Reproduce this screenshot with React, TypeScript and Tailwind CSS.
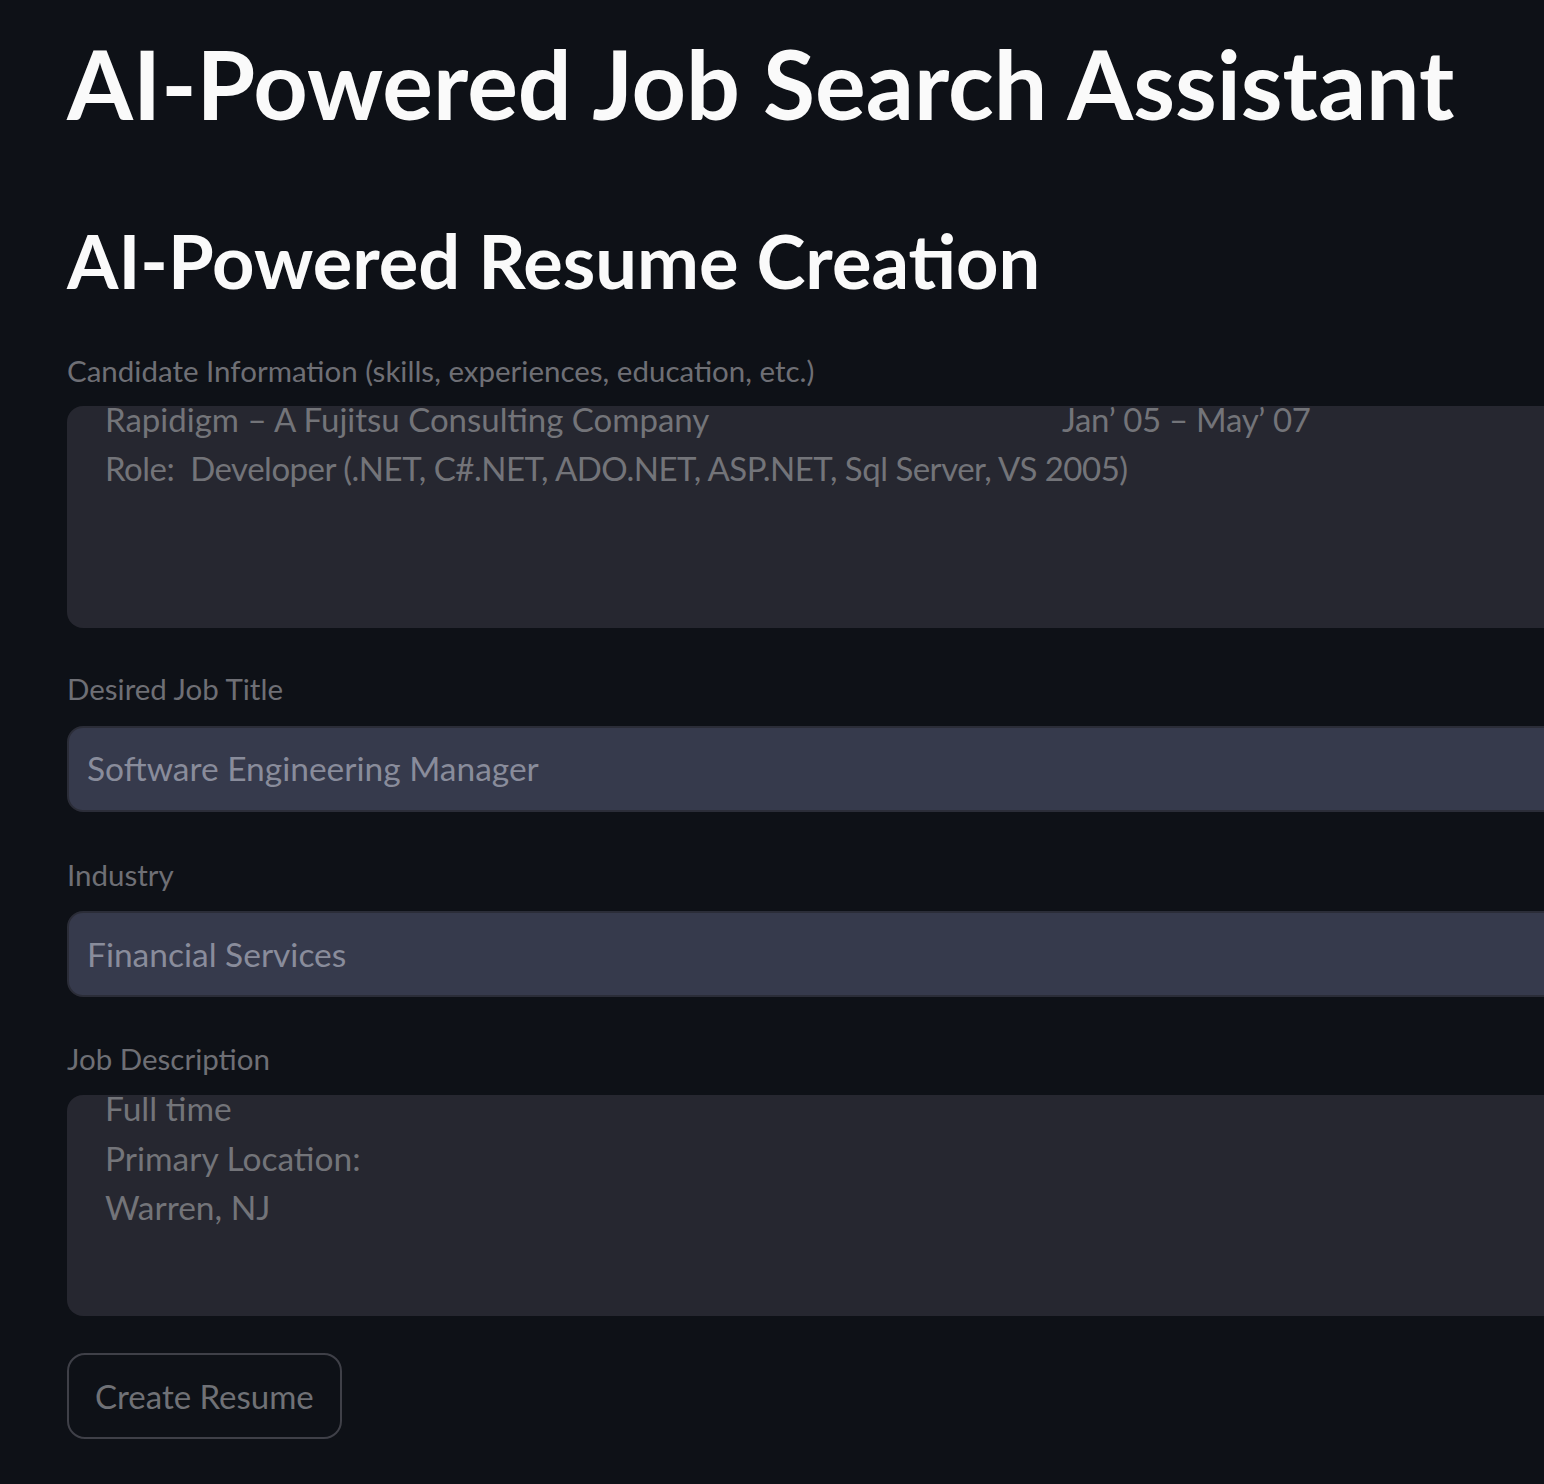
export default function App() {
  return (
    <div className="min-h-screen w-full bg-[#0e1117] overflow-hidden font-['Lato',sans-serif]">
      <div className="w-[1560px] pl-[67px] pt-[26px] pb-[40px]">
        {/* Page title */}
        <h1 className="text-[95px] leading-[1.2] font-bold text-[#fafafa] whitespace-nowrap">
          AI-Powered Job Search Assistant
        </h1>

        {/* Section heading */}
        <h2 className="mt-[77px] text-[74px] leading-[1.2] font-bold text-[#fafafa] whitespace-nowrap">
          AI-Powered Resume Creation
        </h2>

        {/* Candidate info */}
        <label className="mt-[47px] block text-[29.5px] leading-[1.2] text-[#6e6f75]">
          Candidate Information (skills, experiences, education, etc.)
        </label>
        <div className="mt-[18px] h-[222px] rounded-[16px] bg-[#262730] overflow-hidden pl-[38px]">
          <div className="-mt-[11px] text-[33px] leading-[49px] text-[#737479] whitespace-nowrap">
            <div className="flex">
              <span className="w-[957px]">Rapidigm – A Fujitsu Consulting Company</span>
              <span className="tracking-[-0.3px]">Jan’ 05 – May’ 07</span>
            </div>
            <div className="whitespace-pre tracking-[-0.5px]">Role:  Developer (.NET, C#.NET, ADO.NET, ASP.NET, Sql Server, VS 2005)</div>
          </div>
        </div>

        {/* Desired job title */}
        <label className="mt-[43px] block text-[29.5px] leading-[1.2] text-[#6e6f75]">
          Desired Job Title
        </label>
        <div className="mt-[19px] h-[86px] rounded-[16px] border-2 border-[#2b2d38] bg-[#363a4c] flex items-center pl-[18px]">
          <span className="text-[33.5px] leading-[1.2] text-[#898c9b]">Software Engineering Manager</span>
        </div>

        {/* Industry */}
        <label className="mt-[45px] block text-[29.5px] leading-[1.2] text-[#6e6f75]">
          Industry
        </label>
        <div className="mt-[19px] h-[86px] rounded-[16px] border-2 border-[#2b2d38] bg-[#363a4c] flex items-center pl-[18px]">
          <span className="text-[33.5px] leading-[1.2] text-[#898c9b]">Financial Services</span>
        </div>

        {/* Job description */}
        <label className="mt-[44px] block text-[29.5px] leading-[1.2] text-[#6e6f75]">
          Job Description
        </label>
        <div className="mt-[19px] h-[221px] rounded-[16px] bg-[#262730] overflow-hidden pl-[38px]">
          <div className="-mt-[11px] text-[33.5px] leading-[49.5px] text-[#737479] whitespace-nowrap">
            <div>Full time</div>
            <div>Primary Location:</div>
            <div>Warren, NJ</div>
          </div>
        </div>

        <button className="mt-[37px] h-[86px] px-[26px] rounded-[18px] border-2 border-[#3f4048] bg-transparent text-[33px] leading-[1.2] text-[#707176]">
          Create Resume
        </button>
      </div>
    </div>
  );
}
